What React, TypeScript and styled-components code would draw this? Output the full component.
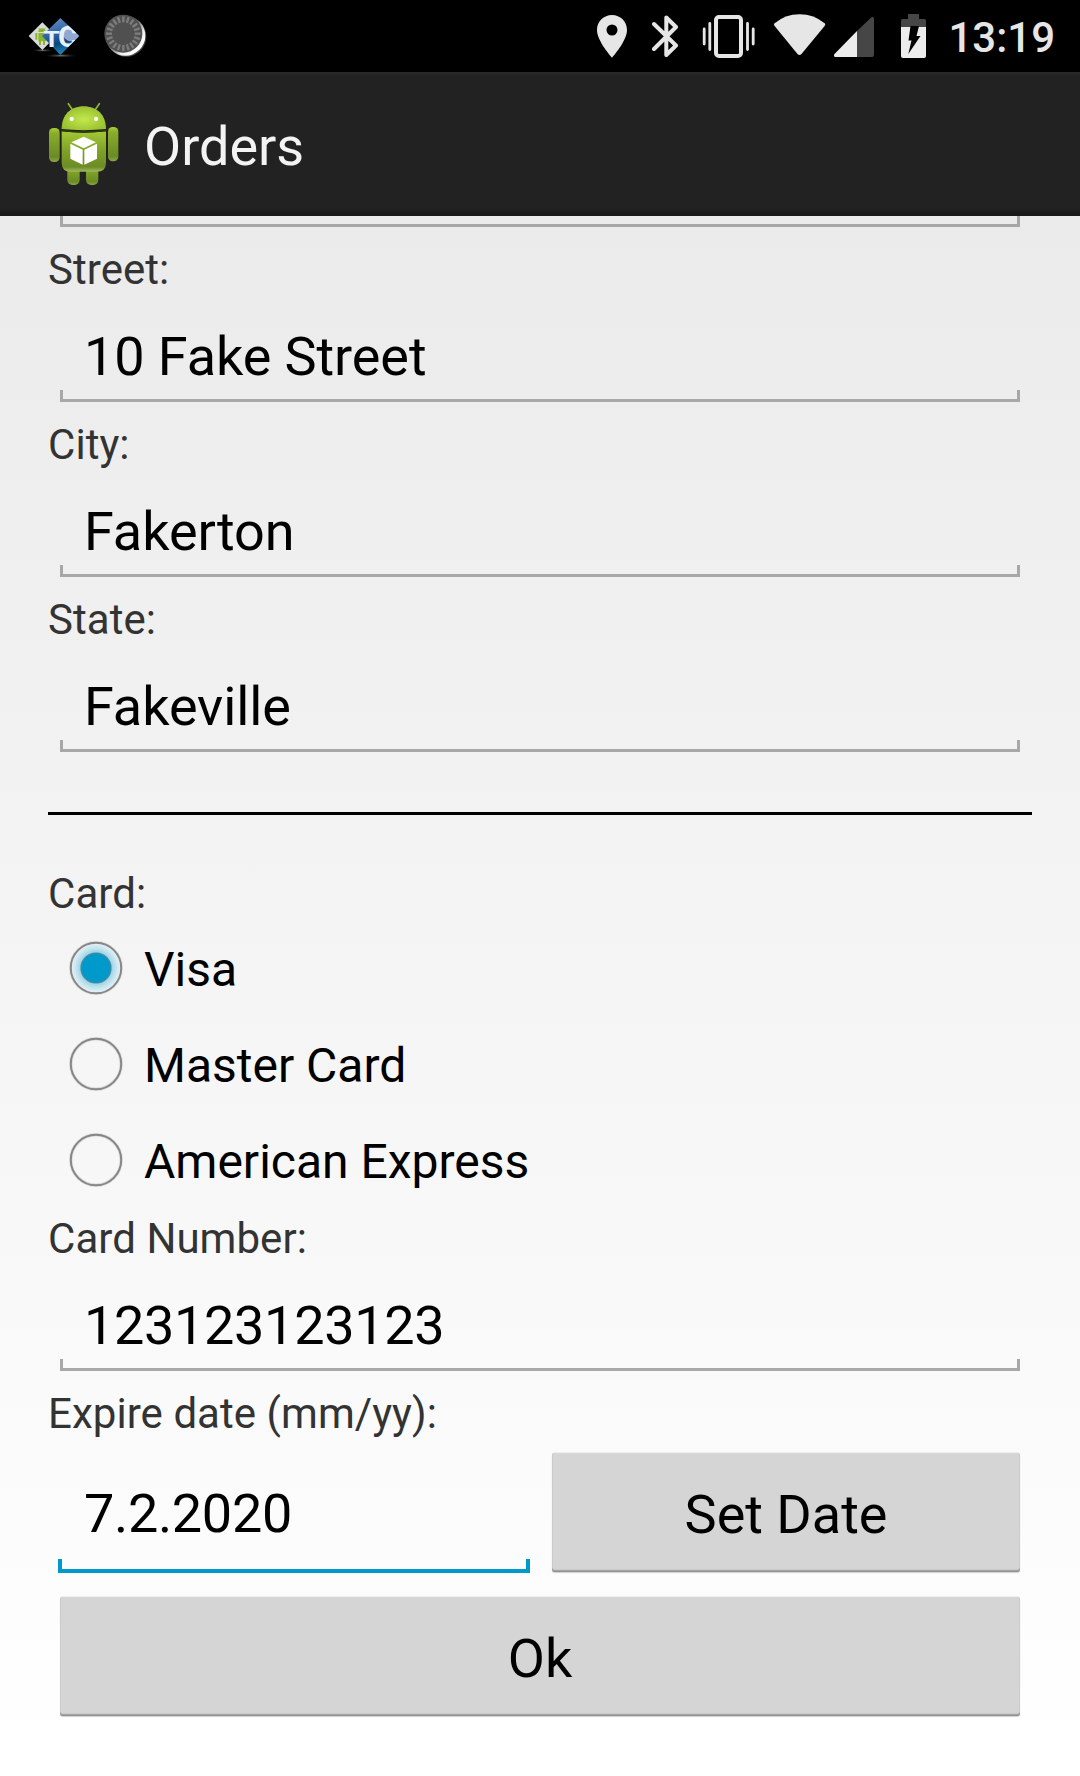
import React from "react";
import styled, { createGlobalStyle } from "styled-components";

const GlobalStyle = createGlobalStyle`
  * { box-sizing: border-box; }
  body { margin: 0; background: #fff; }
`;

const Screen = styled.div`
  width: 1080px;
  height: 1776px;
  display: flex;
  flex-direction: column;
  overflow: hidden;
  font-family: Roboto, "Liberation Sans", sans-serif;
  color: #000;
  background: linear-gradient(#e8e8e8, #ffffff);
`;

const StatusBar = styled.header`
  flex: none;
  height: 72px;
  padding: 0 25px 0 26px;
  display: flex;
  justify-content: space-between;
  background: #000;
`;

const StatusGroup = styled.div<{ $gap: number }>`
  display: flex;
  align-items: flex-start;
  gap: ${(p) => p.$gap}px;
`;

const Glyph = styled.svg<{ $after?: number }>`
  display: block;
  flex: none;
  margin-right: ${(p) => p.$after ?? 0}px;
`;

const Clock = styled.time`
  font-size: 42px;
  font-weight: 500;
  line-height: 76px;
  color: #e6e6e6;
`;

const ActionBar = styled.div`
  flex: none;
  height: 144px;
  padding: 0 0 0 48px;
  display: flex;
  align-items: center;
  gap: 24px;
  background: linear-gradient(#2a2a2a, #222 4px, #222 136px, #1a1a1a 141px, #181818);
`;

const Title = styled.h1`
  margin: 0;
  padding-top: 6px;
  font-size: 54px;
  font-weight: 400;
  line-height: 64px;
  color: #f3f3f3;
`;

const Form = styled.main`
  padding: 0 48px;
  display: flex;
  flex-direction: column;
`;

const ScrolledEdge = styled.div`
  height: 11px;
  margin: 0 12px 14px;
  border: 3px solid #a7a7a7;
  border-top: 0;
`;

const FieldBlock = styled.section`
  height: 175px;
  display: flex;
  flex-direction: column;
`;

const Label = styled.div`
  height: 57px;
  font-size: 42px;
  line-height: 57px;
  letter-spacing: 0.05px;
  color: #333;
`;

const Input = styled.div<{ $active?: boolean }>`
  flex: 1;
  display: flex;
  flex-direction: column;
  justify-content: flex-end;
  padding: ${(p) => (p.$active ? "0 10px 12px" : "0 12px 14px")};
`;

const Value = styled.div<{ $active?: boolean; $numeric?: boolean }>`
  margin-bottom: ${(p) => (p.$active ? 13 : 1)}px;
  padding-left: ${(p) => (p.$active ? 26 : 24)}px;
  font-size: 54px;
  line-height: 64px;
  letter-spacing: ${(p) => (p.$numeric ? -0.33 : -0.09)}px;
`;

const Underline = styled.div<{ $active?: boolean }>`
  height: ${(p) => (p.$active ? 14 : 12)}px;
  border: ${(p) => (p.$active ? "4px solid #0099cc" : "3px solid #a8a8a8")};
  border-top: 0;
`;

const Divider = styled.hr`
  width: 100%;
  height: 3px;
  margin: 46px 0 50px;
  border: 0;
  background: #000;
`;

const Options = styled.div`
  margin-top: -2px;
  margin-bottom: 2px;
  display: flex;
  flex-direction: column;
`;

const Option = styled.div`
  height: 96px;
  padding-left: 21px;
  display: flex;
  align-items: center;
  gap: 21px;
  font-size: 48px;
  line-height: 56px;

  span {
    padding-top: 4px;
  }
`;

const DateRow = styled.div`
  height: 143px;
  display: grid;
  grid-template-columns: 492px 492px;
`;

const Button = styled.button`
  width: auto;
  height: 119px;
  margin: 12px;
  padding: 5px 0 0;
  border: 0;
  border-radius: 3px;
  background: #d5d5d5;
  box-shadow: inset 0 -1px 0 #929292, inset 0 -2px 0 #a6a6a6,
    inset 0 -3px 0 #cacaca, inset 1px 0 0 #cbcbcb, inset -1px 0 0 #cbcbcb,
    inset 0 1px 0 #d9d9d9, 0 -1px 0 rgba(0, 0, 0, 0.05),
    0 1px 1px rgba(0, 0, 0, 0.18);
  font: 400 54px/64px Roboto, "Liberation Sans", sans-serif;
  color: #000;
`;

const DateButton = styled(Button)`
  margin-top: 11px;
`;

const INK = "#e6e6e6";

function LogoIcon() {
  return (
    <Glyph width="58" height="72" viewBox="78 0 174 216">
      <defs>
        <linearGradient id="tile" x1="0" y1="0" x2="0.3" y2="1">
          <stop offset="0" stopColor="#7196c8" />
          <stop offset="0.5" stopColor="#2e62a5" />
          <stop offset="0.75" stopColor="#0c4778" />
          <stop offset="1" stopColor="#1d80b5" />
        </linearGradient>
        <radialGradient id="shade">
          <stop offset="0" stopColor="#777" />
          <stop offset="1" stopColor="#000" stopOpacity="0" />
        </radialGradient>
        <clipPath id="tileClip">
          <path d="M181 54L238 108L181 165L126 108Z" />
        </clipPath>
      </defs>
      <ellipse cx="128" cy="151" rx="36" ry="6" fill="url(#shade)" />
      <ellipse cx="183" cy="167" rx="54" ry="7" fill="url(#shade)" />
      <path d="M127 67L168 108L127 150L86 108Z" fill="#d9dadb" />
      <g fill="#8bb52a">
        <path d="M115 96a11 11 0 0 1 22 0zM115 99h23v25h-23zM106 99h6v20h-6zM117 124h6v11h-6zM129 124h6v11h-6z" />
        <path d="M116 84l5 6M136 84l-5 6" stroke="#8bb52a" strokeWidth="3" />
      </g>
      <path d="M181 54L238 108L181 165L126 108Z" fill="url(#tile)" />
      <circle cx="214" cy="98" r="26" fill="#8fa9d3" clipPath="url(#tileClip)" />
      <g fontFamily="Roboto, sans-serif" fontWeight="700" fill="#e9f1f8">
        <text x="130" y="141" fontSize="66" textLength="50" lengthAdjust="spacingAndGlyphs">T</text>
        <text x="174" y="140" fontSize="90" clipPath="url(#tileClip)">C</text>
      </g>
    </Glyph>
  );
}

function SpinnerIcon() {
  const ticks = Array.from({ length: 20 }, (_, i) => i * 18);
  return (
    <Glyph width="44" height="72" viewBox="313 0 132 216">
      <defs>
        <linearGradient id="rim" x1="0.15" y1="0.15" x2="0.8" y2="0.8">
          <stop offset="0.45" stopColor="#555" />
          <stop offset="0.8" stopColor="#eee" />
          <stop offset="1" stopColor="#fff" />
        </linearGradient>
      </defs>
      <circle cx="380" cy="110" r="60" fill="#444" />
      <circle cx="377" cy="107" r="60" fill="url(#rim)" />
      <circle cx="371" cy="101" r="57" fill="#505050" />
      {ticks.map((a) => (
        <path
          key={a}
          d="M371 49V67"
          stroke="#7c7c7c"
          strokeWidth="7"
          transform={`rotate(${a} 371 101)`}
        />
      ))}
    </Glyph>
  );
}

function PinIcon() {
  return (
    <Glyph $after={25} width="30" height="72" viewBox="597.5 0 30 72">
      <path
        fill={INK}
        fillRule="evenodd"
        d="M612.5 15c-8.3 0-15 6.600-15 14.900 0 11.100 15 27.700 15 27.700s15-16.600 15-27.700c0-8.300-6.700-14.900-15-14.900zm0 20.500a5.500 5.500 0 1 1 0-11 5.500 5.500 0 0 1 0 11z"
      />
    </Glyph>
  );
}

function BluetoothIcon() {
  return (
    <Glyph $after={23} width="27" height="72" viewBox="652.500 0 27 72">
      <path
        fill="none"
        stroke={INK}
        strokeWidth="4"
        strokeLinecap="round"
        strokeLinejoin="round"
        d="M654.500 24L676.500 45.500L666.800 55V17.500L676.500 27L654.500 49"
      />
    </Glyph>
  );
}

function VibrateIcon() {
  return (
    <Glyph $after={18} width="54" height="72" viewBox="702 0 54 72">
      <rect x="716" y="17" width="25" height="39" rx="3" fill="none" stroke={INK} strokeWidth="4" />
      <path
        d="M704.200 29v15M709.800 23.500v26M747.500 23.500v26M753.200 29v15"
        stroke={INK}
        strokeWidth="2.800"
        strokeLinecap="round"
      />
    </Glyph>
  );
}

function WifiIcon() {
  return (
    <Glyph $after={8} width="52" height="72" viewBox="774 0 52 72">
      <path
        fill={INK}
        d="M774.300 23.500Q785 14.200 799.500 14.200T825 23.500Q825.600 24.600 824.600 26L801.500 54Q799.500 56 797.500 54L774.600 26Q773.500 24.600 774.300 23.500z"
      />
    </Glyph>
  );
}

function SignalIcon() {
  return (
    <Glyph $after={27} width="40" height="72" viewBox="834 0 40 72">
      <path d="M857 31L871.200 17.500Q874 16 874 19V55Q874 57 872 57H857z" fill="#464646" />
      <path d="M857 31V57H835.500Q833 56.500 834.500 54z" fill="#ececec" />
    </Glyph>
  );
}

function BatteryIcon() {
  return (
    <Glyph $after={21} width="26" height="72" viewBox="901 0 26 72">
      <path d="M901 27V20.500Q901 19 902.500 19H908V14H919V19H924.500Q926 19 926 20.500V27z" fill="#464646" />
      <path d="M901 27H926V56Q926 58 924 58H903Q901 58 901 56z" fill="#ececec" />
      <path d="M910.500 26H919L916.500 36H920.500L908.300 54L911.500 40.500H908.500z" fill="#000" />
    </Glyph>
  );
}

function RobotIcon() {
  return (
    <Glyph width="72" height="84" viewBox="54 66 216 252">
      <defs>
        <radialGradient id="head" cx="0.5" cy="0.55" r="0.6">
          <stop offset="0" stopColor="#c3e84e" />
          <stop offset="1" stopColor="#95bd2c" />
        </radialGradient>
        <linearGradient id="body" x1="0" y1="0" x2="0" y2="1">
          <stop offset="0" stopColor="#a2c834" />
          <stop offset="0.5" stopColor="#7ea026" />
          <stop offset="0.88" stopColor="#6c8c25" />
          <stop offset="1" stopColor="#a1b960" />
        </linearGradient>
        <linearGradient id="limb" x1="0" y1="0" x2="0" y2="1">
          <stop offset="0" stopColor="#a9ce3b" />
          <stop offset="0.15" stopColor="#8aad2b" />
          <stop offset="0.85" stopColor="#6a8b24" />
          <stop offset="1" stopColor="#8ca74b" />
        </linearGradient>
      </defs>
      <path d="M115 71L128 90M208 71L195 90" stroke="#91b432" strokeWidth="5" strokeLinecap="round" />
      <rect x="112" y="250" width="37" height="65" rx="15" fill="url(#limb)" />
      <rect x="168" y="250" width="37" height="65" rx="15" fill="url(#limb)" />
      <rect x="57" y="144" width="32" height="102" rx="14" fill="url(#limb)" />
      <rect x="234" y="141" width="31" height="103" rx="14" fill="url(#limb)" />
      <path d="M95 154Q161 162 228 154V248Q228 275 200 275H122Q95 275 95 248z" fill="url(#body)" />
      <path d="M95 147C95 105 121 79 161 79S228 105 228 147Q161 154 95 147z" fill="url(#head)" />
      <path d="M94 149Q161 157 229 149V154Q161 162 94 154z" fill="#2d390d" />
      <circle cx="125" cy="117" r="6.500" fill="#fff" />
      <circle cx="198" cy="117" r="6.500" fill="#fff" />
      <path d="M124 187L161 170L198 187L161 205z" fill="#fff" />
      <path d="M121 191L158 209V254L121 236zM201 191L163 209V254L201 236z" fill="#fff" />
    </Glyph>
  );
}

function RadioMark({ checked }: { checked?: boolean }) {
  return (
    <svg width="54" height="54" viewBox="0 0 54 54">
      <defs>
        <radialGradient id="glow">
          <stop offset="0.55" stopColor="#8ccde5" />
          <stop offset="0.8" stopColor="#c6e5ef" />
          <stop offset="1" stopColor="#e9f2f5" />
        </radialGradient>
      </defs>
      <circle cx="27" cy="27" r="25.200" fill="none" stroke="#868686" strokeOpacity="0.25" strokeWidth="3.400" />
      <circle
        cx="27"
        cy="27"
        r="25.200"
        fill={checked ? "url(#glow)" : "none"}
        stroke="#868686"
        strokeWidth="1.900"
      />
      {checked && <circle cx="27" cy="27" r="14.800" fill="#0099cc" stroke="#3c8aa5" strokeWidth="1.600" />}
    </svg>
  );
}

function Field({ label, value, numeric }: { label: string; value: string; numeric?: boolean }) {
  return (
    <FieldBlock>
      <Label>{label}</Label>
      <Input>
        <Value $numeric={numeric}>{value}</Value>
        <Underline />
      </Input>
    </FieldBlock>
  );
}

const cards = ["Visa", "Master Card", "American Express"];

export default function App() {
  return (
    <Screen>
      <GlobalStyle />
      <StatusBar>
        <StatusGroup $gap={20}>
          <LogoIcon />
          <SpinnerIcon />
        </StatusGroup>
        <StatusGroup $gap={0}>
          <PinIcon />
          <BluetoothIcon />
          <VibrateIcon />
          <WifiIcon />
          <SignalIcon />
          <BatteryIcon />
          <Clock>13:19</Clock>
        </StatusGroup>
      </StatusBar>
      <ActionBar>
        <RobotIcon />
        <Title>Orders</Title>
      </ActionBar>
      <Form>
        <ScrolledEdge />
        <Field label="Street:" value="10 Fake Street" />
        <Field label="City:" value="Fakerton" />
        <Field label="State:" value="Fakeville" />
        <Divider />
        <Label>Card:</Label>
        <Options>
          {cards.map((card, i) => (
            <Option key={card}>
              <RadioMark checked={i === 0} />
              <span>{card}</span>
            </Option>
          ))}
        </Options>
        <Field label="Card Number:" value="123123123123" numeric />
        <Label>Expire date (mm/yy):</Label>
        <DateRow>
          <Input $active>
            <Value $active $numeric>7.2.2020</Value>
            <Underline $active />
          </Input>
          <DateButton>Set Date</DateButton>
        </DateRow>
        <Button>Ok</Button>
      </Form>
    </Screen>
  );
}
